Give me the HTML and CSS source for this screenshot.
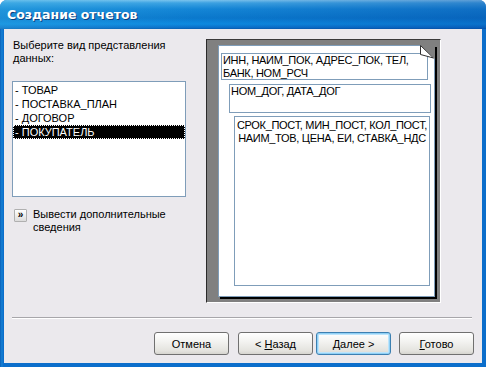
FILE: index.html
```html
<!DOCTYPE html>
<html>
<head>
    <title>Создание отчетов</title>
    <meta charset="UTF-8">
    <link rel="stylesheet" href="styles.css">
</head>
<body>
    <div class="window">
        <div class="titlebar">Создание отчетов</div>
        <div class="client">
            <div class="main">
                <div class="left">
                    <div class="prompt">Выберите вид представления данных:</div>
                    <ul class="list">
                        <li>- ТОВАР</li>
                        <li>- ПОСТАВКА_ПЛАН</li>
                        <li>- ДОГОВОР</li>
                        <li class="selected"><span>- ПОКУПАТЕЛЬ</span></li>
                    </ul>
                    <div class="more">
                        <span class="more-btn">»</span>
                        <span class="more-text">Вывести дополнительные сведения</span>
                    </div>
                </div>
                <div class="preview">
                    <div class="page">
                        <div class="box box-1">ИНН, НАИМ_ПОК, АДРЕС_ПОК, ТЕЛ, БАНК, НОМ_РСЧ</div>
                        <div class="box box-2">НОМ_ДОГ, ДАТА_ДОГ</div>
                        <div class="box box-3">СРОК_ПОСТ, МИН_ПОСТ, КОЛ_ПОСТ,<br>НАИМ_ТОВ, ЦЕНА, ЕИ, СТАВКА_НДС</div>
                        <svg class="fold" width="15" height="14" viewBox="0 0 15 14">
                            <polygon points="0,0 15,0 15,14" fill="#808080"/>
                            <polygon points="0.5,0.5 0.5,9.5 13.5,13" fill="#ffffff" stroke="#303030" stroke-width="1"/>
                        </svg>
                    </div>
                </div>
            </div>
            <div class="separator"></div>
            <div class="buttons">
                <button class="btn btn-cancel">Отмена</button>
                <button class="btn btn-back">&lt; <u>Н</u>азад</button>
                <button class="btn btn-next focused"><u>Д</u>алее &gt;</button>
                <button class="btn btn-done"><u>Г</u>отово</button>
            </div>
        </div>
    </div>
</body>
</html>
```

FILE: styles.css
```css
body {
    margin: 0;
    background: #ffffff;
    font-family: 'Liberation Sans', Arial, sans-serif;
    font-size: 11px;
    line-height: 13px;
    color: #000;
}

.window {
    width: 486px;
    height: 367px;
    box-sizing: border-box;
    display: flex;
    flex-direction: column;
    background: linear-gradient(to right, #0a5fb8, #1683d6 2px, #0b6ecb 3px);
    border-radius: 7px 7px 0 0;
    overflow: hidden;
    padding: 0 4px 4px 4px;
}

.titlebar {
    height: 29px;
    margin: 0 -4px;
    padding-left: 7px;
    display: flex;
    align-items: center;
    color: #fff;
    font-family: 'DejaVu Sans', sans-serif;
    font-weight: bold;
    font-size: 12.5px;
    text-shadow: 1px 1px 0 #0a3f80;
    background:
        linear-gradient(to right, rgba(60, 180, 230, 0.35), rgba(0, 0, 0, 0) 40%, rgba(0, 40, 140, 0.25)),
        linear-gradient(to bottom, #7cc4ee 0, #3ca2e2 3px, #1486d6 9px, #0a78cc 18px, #0d8ae0 24px, #0a6cc6 28px, #085aa8 29px);
}

.client {
    flex: 1;
    background: #ebe9ed;
    padding: 10px 0 0 8px;
    display: flex;
    flex-direction: column;
}

.main {
    display: flex;
    height: 264px;
}

.left {
    width: 174px;
    margin-right: 20px;
}

.prompt {
    padding-left: 1px;
    width: 170px;
}

.list {
    list-style: none;
    margin: 16px 0 0 0;
    padding: 1px 0 0 0;
    height: 113px;
    border: 1px solid #7f9db9;
    background: #fff;
}

.list li {
    height: 14px;
    line-height: 14px;
    padding-left: 2px;
    white-space: nowrap;
}

.list li.selected {
    background: #000;
    color: #fff;
    outline: 1px dotted #fff;
    outline-offset: -1px;
}

.more {
    display: flex;
    align-items: flex-start;
    margin-top: 11px;
    padding-left: 2px;
}

.more-btn {
    width: 11px;
    height: 11px;
    margin-top: 1px;
    margin-right: 6px;
    border: 1px solid #b0b0b0;
    border-radius: 1px;
    background: linear-gradient(to bottom, #ffffff, #dcdcdc);
    font-size: 10px;
    line-height: 10px;
    font-weight: bold;
    text-align: center;
}

.more-text {
    width: 140px;
}

.preview {
    width: 235px;
    height: 264px;
    box-sizing: border-box;
    background: #808080;
    border-top: 1px solid #3a3a3a;
    border-left: 1px solid #2a2a2a;
    border-right: 1px solid #ffffff;
    border-bottom: 1px solid #ffffff;
    padding: 5px 0 0 11px;
}

.page {
    position: relative;
    width: 217px;
    height: 252px;
    box-sizing: border-box;
    background: #fff;
    border: 1px solid #7f9db9;
    box-shadow: 2px 2px 0 #000;
    display: flex;
    flex-direction: column;
    align-items: flex-start;
}

.box {
    box-sizing: border-box;
    border: 1px solid #7f9db9;
    letter-spacing: -0.3px;
}

.box-1 {
    width: 207px;
    height: 27px;
    margin: 7px 0 0 2px;
    padding-left: 1px;
}

.box-2 {
    width: 202px;
    height: 29px;
    margin: 4px 0 0 10px;
    padding-left: 1px;
}

.box-3 {
    width: 196px;
    height: 170px;
    margin: 3px 0 0 15px;
    padding: 2px 0 0 0;
    text-align: center;
    white-space: nowrap;
}

.fold {
    position: absolute;
    top: -1px;
    right: -1px;
}

.separator {
    margin: 14px 10px 0 0;
    height: 1px;
    background: #a7a6aa;
    border-bottom: 1px solid #ffffff;
}

.buttons {
    display: flex;
    justify-content: flex-end;
    padding-right: 8px;
    margin-top: 13px;
}

.btn {
    width: 75px;
    height: 23px;
    margin: 0;
    padding: 0;
    border: 1px solid #707070;
    border-radius: 3px;
    background: linear-gradient(to bottom, #ffffff 0, #f3f3f1 40%, #e4e3de 85%, #d6d5cf 100%);
    font-family: 'Liberation Sans', Arial, sans-serif;
    font-size: 11px;
    color: #000;
}

.btn-cancel {
    margin-right: 9px;
}

.btn-back {
    margin-right: 3px;
}

.btn-next {
    margin-right: 8px;
}

.btn.focused {
    border-color: #3c7fb1;
    box-shadow: inset 0 0 0 1px #8fd0f5, inset 0 0 0 2px #bde4fb;
}
```
